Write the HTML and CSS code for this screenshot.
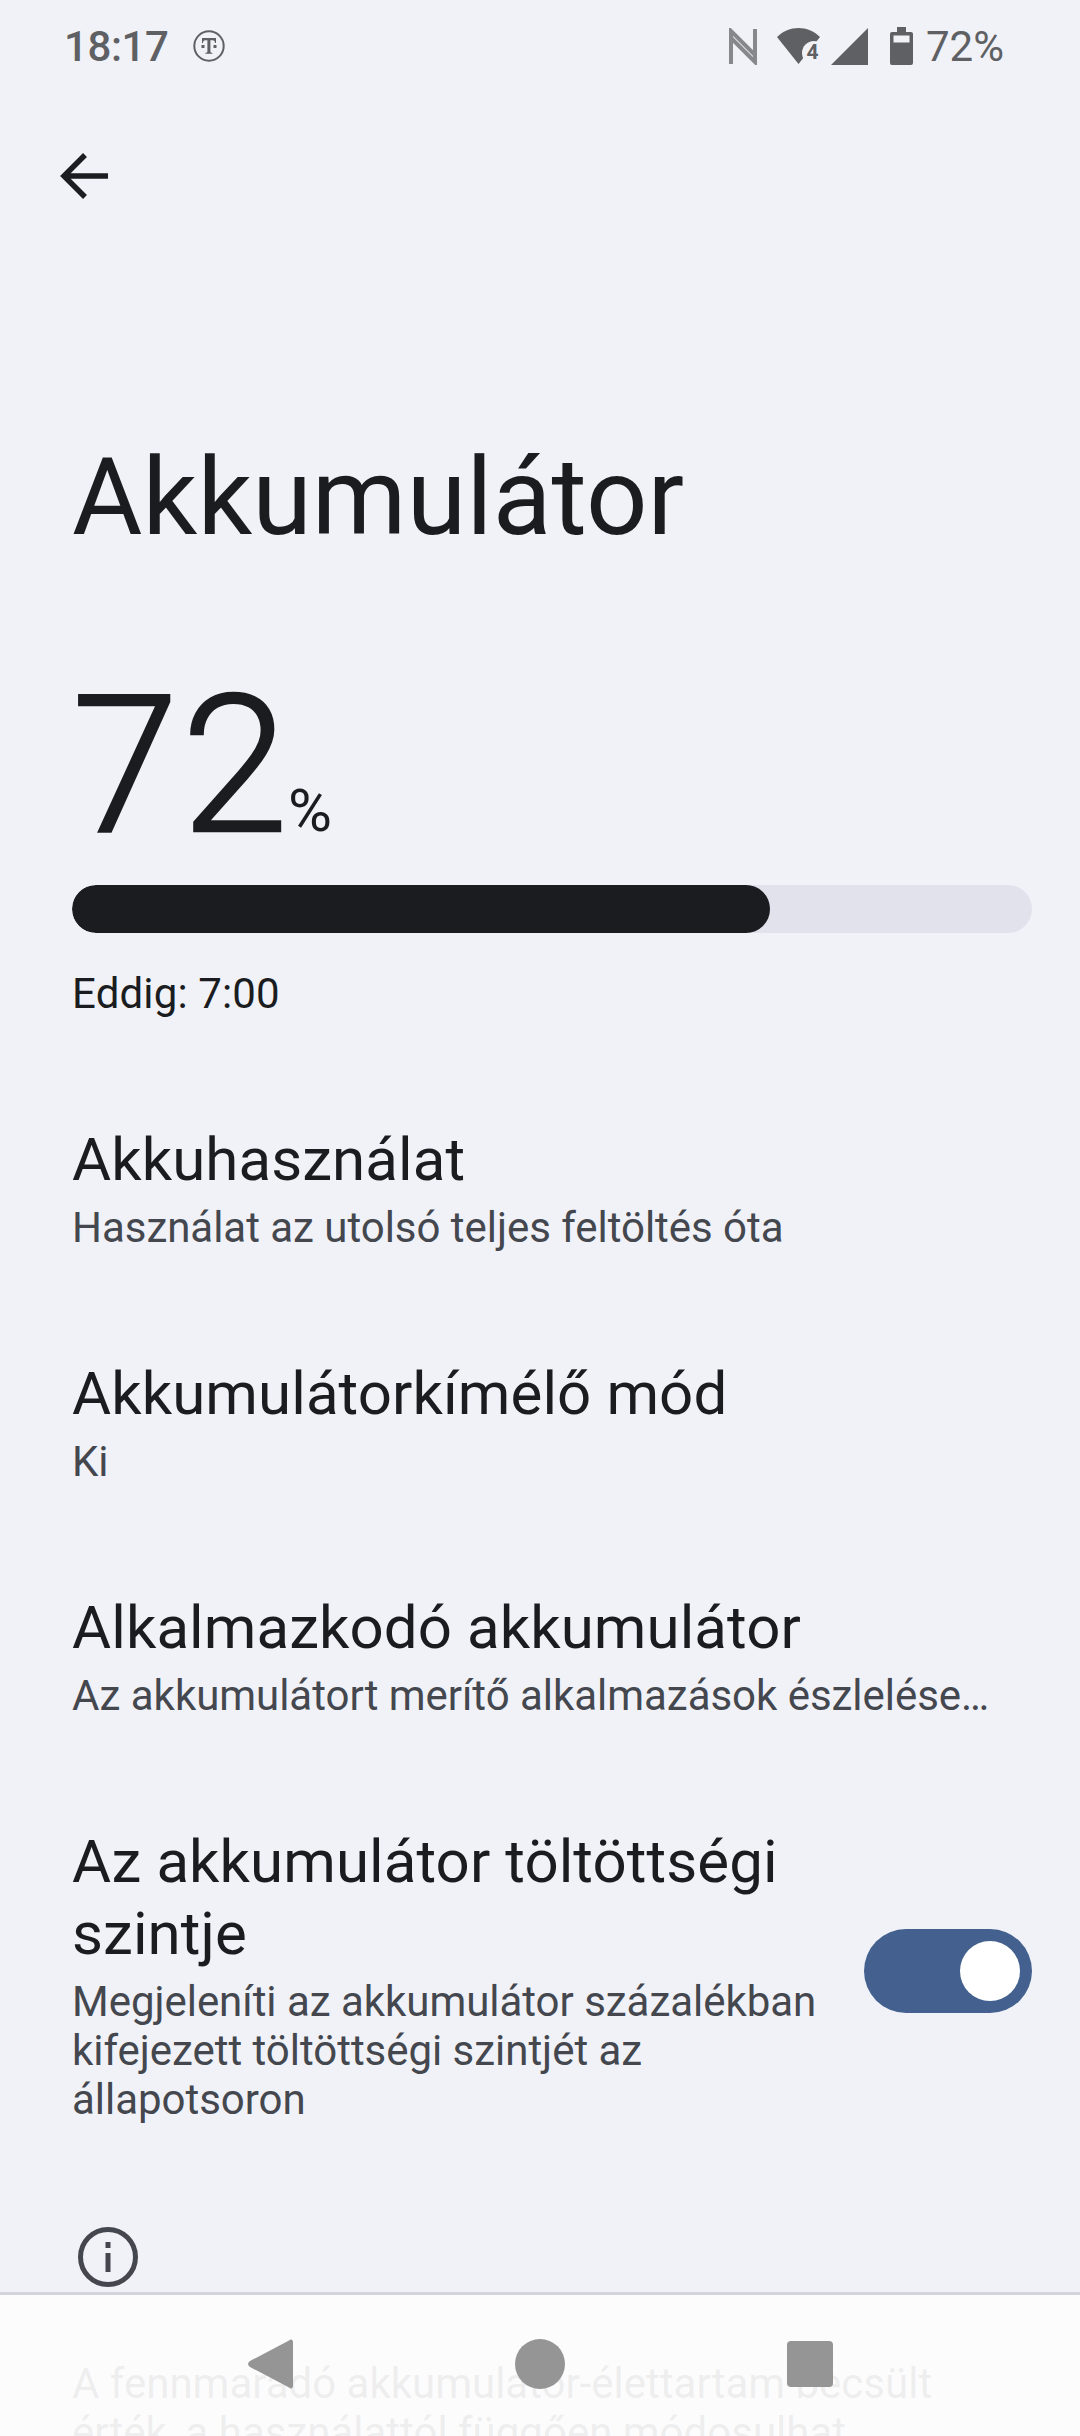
FILE: index.html
```html
<!DOCTYPE html>
<html lang="hu">
<head>
<meta charset="utf-8">
<title>Akkumulátor</title>
<link rel="stylesheet" href="styles.css">
</head>
<body>
<div class="screen">
  <header class="status">
    <div class="status-left">
      <span class="time">18:17</span>
      <svg class="tm" viewBox="0 0 32 32" width="32" height="32"><circle cx="16" cy="16" r="14.7" fill="none" stroke="#5f6063" stroke-width="2"/><path d="M9 8h14v5h-1c0-1.600-.8-2.800-2.400-2.800h-2.200v11c0 1.200.5 1.600 2 1.600v.9h-7v-.9c1.500 0 2-.4 2-1.600v-11h-2.200C10.800 10.200 10 11.400 10 13H9z" fill="#5f6063"/><rect x="8.500" y="15" width="3" height="3" fill="#5f6063"/><rect x="20.500" y="15" width="3" height="3" fill="#5f6063"/></svg>
    </div>
    <div class="status-right">
      <svg class="nfc" viewBox="0 0 30 37" width="30" height="37"><path d="M3 36V3l24 24M27 1v33L3 10" fill="none" stroke="#87888b" stroke-width="4"/></svg>
      <svg class="wifi" viewBox="0 0 43 36" width="43" height="36"><path d="M0 9C12-3 31-3 43 9L21.500 36z" fill="#5f6063"/><circle cx="37" cy="25" r="12" fill="#f0f2f8"/><text x="29.500" y="31" class="wifi-num">4</text></svg>
      <svg class="signal" viewBox="0 0 37 37" width="37" height="37"><path d="M37 0v37H0z" fill="#5f6063"/></svg>
      <svg class="batt" viewBox="0 0 23 38" width="23" height="38"><path d="M7 0h9v5h5a2 2 0 0 1 2 2v29a2 2 0 0 1-2 2H2a2 2 0 0 1-2-2V7a2 2 0 0 1 2-2h5z" fill="#5f6063"/><rect x="3.500" y="8.500" width="16" height="7" fill="#f0f2f8"/></svg>
      <span class="pct">72%</span>
    </div>
  </header>

  <div class="toolbar">
    <svg viewBox="0 0 48 48" width="48" height="48"><path d="M48 24H4M25 3 4 24 25 45" fill="none" stroke="#1c1d20" stroke-width="5.500"/></svg>
  </div>

  <h1 class="title">Akkumulátor</h1>

  <div class="level"><span class="level-num">72</span><span class="level-unit">%</span></div>
  <div class="bar"><div class="bar-fill" style="width:72.7%"></div></div>
  <p class="until">Eddig: 7:00</p>

  <section class="list">
    <div class="item">
      <div class="item-title">Akkuhasználat</div>
      <div class="item-sub">Használat az utolsó teljes feltöltés óta</div>
    </div>
    <div class="item">
      <div class="item-title">Akkumulátorkímélő mód</div>
      <div class="item-sub">Ki</div>
    </div>
    <div class="item">
      <div class="item-title">Alkalmazkodó akkumulátor</div>
      <div class="item-sub">Az akkumulátort merítő alkalmazások észlelése…</div>
    </div>
    <div class="item item-switch">
      <div class="item-text">
        <div class="item-title">Az akkumulátor töltöttségi szintje</div>
        <div class="item-sub">Megjeleníti az akkumulátor százalékban kifejezett töltöttségi szintjét az állapotsoron</div>
      </div>
      <div class="switch"><div class="knob"></div></div>
    </div>
  </section>

  <div class="info">
    <svg class="info-icon" viewBox="0 0 60 60" width="60" height="60"><circle cx="30" cy="30" r="27.500" fill="none" stroke="#44474e" stroke-width="5"/><rect x="27.500" y="15" width="5" height="6" fill="#44474e"/><rect x="27.500" y="26" width="5" height="19" fill="#44474e"/></svg>
    <p class="info-text">A fennmaradó akkumulátor-élettartam becsült érték, a használattól függően módosulhat</p>
  </div>

  <nav class="navbar">
    <svg viewBox="0 0 45 50" width="45" height="50"><path d="M41 1.500c2-2 4-1 4 2v43c0 3-2 4-4 2L2 28c-2.500-2-2.500-4 0-6z" fill="#959595"/></svg>
    <svg viewBox="0 0 50 50" width="50" height="50"><circle cx="25" cy="25" r="25" fill="#959595"/></svg>
    <svg viewBox="0 0 46 46" width="46" height="46"><rect width="46" height="46" rx="4" fill="#959595"/></svg>
  </nav>
</div>
</body>
</html>
```
FILE: styles.css
```css
* { box-sizing: border-box; }
html, body { margin: 0; padding: 0; }
body { background: #f0f2f8; font-family: Roboto, "Noto Sans", sans-serif; color: #1a1c20; }
.screen { position: relative; width: 1080px; height: 2436px; overflow: hidden; background: #f0f2f8; }

.status { height: 92px; display: flex; justify-content: space-between; align-items: center; padding: 0 76px 0 64px; color: #5f6063; }
.status-left, .status-right { display: flex; align-items: center; }
.time { font-size: 42px; font-weight: 500; letter-spacing: -0.4px; }
.tm { margin-left: 24px; }
.nfc { margin-right: 19px; }
.wifi { margin-right: 11px; }
.wifi-num { font-size: 21px; font-weight: 700; fill: #5f6063; font-family: Roboto, sans-serif; }
.signal { margin-right: 22px; }
.batt { margin-right: 13px; }
.pct { font-size: 42px; }

.toolbar { height: 72px; margin-top: 48px; padding-left: 60px; display: flex; align-items: center; }

.title { margin: 224px 0 0 72px; font-size: 108px; line-height: 122px; font-weight: 400; letter-spacing: 0.1px; }

.level { margin: 112px 0 0 72px; display: flex; align-items: baseline; height: 195px; line-height: 192px; }
.level-num { font-size: 192px; font-weight: 300; letter-spacing: 3px; -webkit-text-stroke: 2.5px #1a1c20; }
.level-unit { font-size: 60px; font-weight: 400; margin-left: -3px; }

.bar { margin: 20px 48px 0 72px; height: 48px; border-radius: 24px; background: #e1e2ec; overflow: hidden; }
.bar-fill { height: 100%; background: #1a1c20; border-radius: 24px; }

.until { margin: 33px 0 0 72px; font-size: 42px; line-height: 56px; letter-spacing: 0.15px; }

.list { margin-top: 102px; }
.item { padding: 0 48px 0 72px; margin-bottom: 106px; }
.item-title { font-size: 60px; line-height: 72px; letter-spacing: 0.08px; }
.item-sub { font-size: 42px; line-height: 49px; color: #44474e; margin-top: 7px; letter-spacing: -0.03px; }
.item-switch { display: flex; align-items: center; justify-content: space-between; margin-bottom: 103px; }
.item-text { width: 760px; }
.switch { width: 168px; height: 84px; margin-bottom: 8px; border-radius: 42px; background: #43608f; display: flex; align-items: center; justify-content: flex-end; padding-right: 12px; }
.knob { width: 60px; height: 60px; border-radius: 50%; background: #fff; }

.info { padding: 0 48px 0 72px; }
.info-icon { display: block; margin-left: 6px; }
.info-text { margin: 72px 0 0; font-size: 42px; line-height: 49px; color: #44474e; width: 920px; }

.navbar { position: absolute; left: 0; right: 0; top: 2292px; height: 144px; background: rgba(253,253,253,.92); border-top: 3px solid #d3d3dc; display: flex; align-items: flex-start; padding-top: 44px; }
.navbar svg:nth-child(1) { margin-left: 248px; }
.navbar svg:nth-child(2) { margin-left: 222px; }
.navbar svg:nth-child(3) { margin-left: 222px; margin-top: 2px; }
```
